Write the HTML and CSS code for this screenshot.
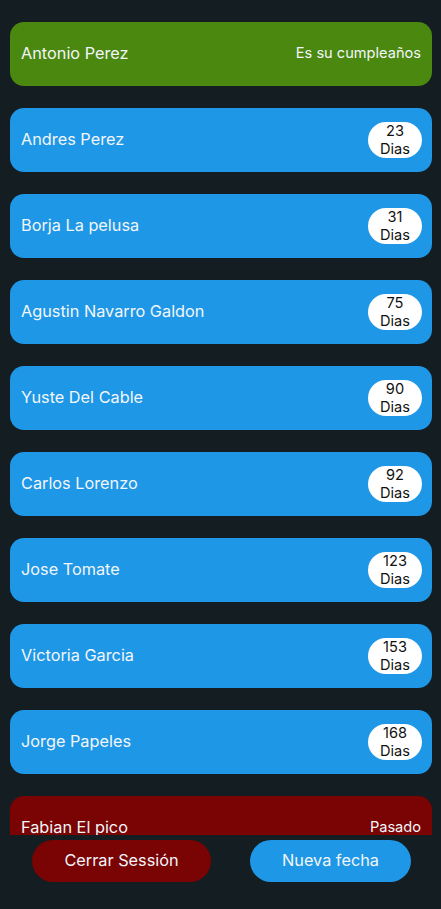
FILE: index.html
```html
<!DOCTYPE html>
<html lang="es">
<head>
<meta charset="utf-8">
<title>Cumpleaños</title>
<link rel="stylesheet" href="styles.css">
</head>
<body>
<div class="app">
  <div class="list">
    <div class="card today"><span class="name">Antonio Perez</span><span class="status">Es su cumpleaños</span></div>
    <div class="card"><span class="name">Andres Perez</span><span class="badge">23<br>Dias</span></div>
    <div class="card"><span class="name">Borja La pelusa</span><span class="badge">31<br>Dias</span></div>
    <div class="card"><span class="name">Agustin Navarro Galdon</span><span class="badge">75<br>Dias</span></div>
    <div class="card"><span class="name">Yuste Del Cable</span><span class="badge">90<br>Dias</span></div>
    <div class="card"><span class="name">Carlos Lorenzo</span><span class="badge">92<br>Dias</span></div>
    <div class="card"><span class="name">Jose Tomate</span><span class="badge">123<br>Dias</span></div>
    <div class="card"><span class="name">Victoria Garcia</span><span class="badge">153<br>Dias</span></div>
    <div class="card"><span class="name">Jorge Papeles</span><span class="badge">168<br>Dias</span></div>
    <div class="card past"><span class="name">Fabian El pico</span><span class="status">Pasado</span></div>
  </div>
  <div class="footer">
    <button class="btn logout">Cerrar Sessión</button>
    <button class="btn new">Nueva fecha</button>
  </div>
</div>
</body>
</html>
```
FILE: styles.css
```css
html, body {
  margin: 0;
  padding: 0;
  background: #141d22;
  font-family: "Inter", "Liberation Sans", sans-serif;
}
.app {
  width: 441px;
  height: 909px;
  display: flex;
  flex-direction: column;
}
.list {
  height: 835px;
  overflow: hidden;
  display: flex;
  flex-direction: column;
  gap: 22px;
  padding: 22px 9px 0 10px;
  box-sizing: border-box;
}
.card {
  flex: 0 0 64px;
  height: 64px;
  box-sizing: border-box;
  border-radius: 14px;
  background: #1e97e6;
  display: flex;
  align-items: center;
  justify-content: space-between;
  padding: 0 11px 3px 11px;
  color: #f2f6fa;
}
.card.today { background: #4b880f; }
.card.past { background: #7a0303; }
.name { font-size: 16.3px; }
.status { font-size: 14.6px; }
.badge {
  background: #fff;
  color: #111;
  width: 54px;
  height: 36px;
  margin-top: 3px;
  border-radius: 18px;
  text-align: center;
  font-size: 14.6px;
  line-height: 18px;
  display: flex;
  align-items: center;
  justify-content: center;
  margin-right: -1px;
}
.footer {
  display: flex;
  padding: 5px 0 0 32px;
  gap: 39px;
}
.btn {
  height: 42px;
  border: none;
  border-radius: 21px;
  font-family: inherit;
  font-size: 16.3px;
  color: #f2f6fa;
  padding: 0 0 2px;
}
.logout { width: 179px; background: #7a0303; }
.new { width: 161px; background: #1e97e6; }
```
